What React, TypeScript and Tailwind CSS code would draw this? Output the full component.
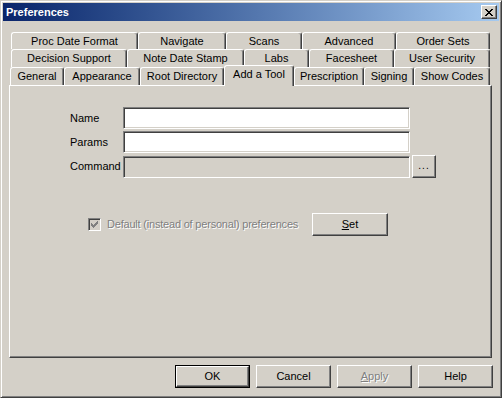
import React from 'react'

const raised =
  'border border-t-white border-l-white border-r-[#404040] border-b-[#404040] shadow-[inset_-1px_-1px_0_#808080,inset_1px_1px_0_#d4d0c8]'
const sunken =
  'border border-t-[#808080] border-l-[#808080] border-r-white border-b-white shadow-[inset_1px_1px_0_#404040,inset_-1px_-1px_0_#d4d0c8]'

type Tab = { label: string; w: string }

const row1: Tab[] = [
  { label: 'Proc Date Format', w: 'w-[127px]' },
  { label: 'Navigate', w: 'w-[88px]' },
  { label: 'Scans', w: 'w-[76px]' },
  { label: 'Advanced', w: 'w-[94px]' },
  { label: 'Order Sets', w: 'w-[94px]' },
]
const row2: Tab[] = [
  { label: 'Decision Support', w: 'w-[116px]' },
  { label: 'Note Date Stamp', w: 'w-[117px]' },
  { label: 'Labs', w: 'w-[65px]' },
  { label: 'Facesheet', w: 'w-[85px]' },
  { label: 'User Security', w: 'w-[96px]' },
]
const row3: Tab[] = [
  { label: 'General', w: 'w-[54px]' },
  { label: 'Appearance', w: 'w-[76px]' },
  { label: 'Root Directory', w: 'w-[84px]' },
  { label: 'Add a Tool', w: 'w-[70px]' },
  { label: 'Prescription', w: 'w-[70px]' },
  { label: 'Signing', w: 'w-[50px]' },
  { label: 'Show Codes', w: 'w-[76px]' },
]

function TabButton({ tab, active, h = 'h-[18px]' }: { tab: Tab; active?: boolean; h?: string }) {
  if (active) {
    return (
      <div
        className={`${tab.w} relative top-[1px] z-10 h-[21px] shrink-0 rounded-t-[3px] border-l border-t border-r border-t-white border-l-white border-r-[#404040] bg-[#d4d0c8] shadow-[inset_-1px_0_0_#808080] flex items-center justify-center pb-[3px]`}
      >
        {tab.label}
      </div>
    )
  }
  return (
    <div
      className={`${tab.w} ${h} shrink-0 rounded-t-[3px] border-l border-t border-r border-t-white border-l-white border-r-[#404040] shadow-[inset_-1px_0_0_#808080] flex items-center justify-center`}
    >
      {tab.label}
    </div>
  )
}

function Btn({ children, className = '' }: { children: React.ReactNode; className?: string }) {
  return (
    <div className={`${raised} h-[23px] flex items-center justify-center ${className}`}>{children}</div>
  )
}

export default function App() {
  return (
    <div className="w-[502px] h-[398px] overflow-hidden bg-[#d4d0c8] text-black text-[11px] leading-none font-['Liberation_Sans',Arial,sans-serif] border border-t-[#d4d0c8] border-l-[#d4d0c8] border-r-[#404040] border-b-[#404040] shadow-[inset_1px_1px_0_white,inset_-1px_-1px_0_#808080] p-[2px] flex flex-col">
      {/* title bar */}
      <div className="h-[18px] bg-gradient-to-r from-[#0a246a] to-[#a6caf0] flex items-center pl-[3px] pr-[2px]">
        <span className="text-white font-bold text-[11px]">Preferences</span>
        <div className={`${raised} ml-auto w-[16px] h-[14px] bg-[#d4d0c8] flex items-center justify-center`}>
          <svg width="8" height="7" viewBox="0 0 8 7" shapeRendering="crispEdges">
            <path d="M0 0h2v1h-2zM6 0h2v1h-2zM1 1h2v1h-2zM5 1h2v1h-2zM2 2h4v1h-4zM3 3h2v1h-2zM2 4h4v1h-4zM1 5h2v1h-2zM5 5h2v1h-2zM0 6h2v1h-2zM6 6h2v1h-2z" fill="#000" />
          </svg>
        </div>
      </div>

      {/* tabs */}
      <div className="mt-[11px] ml-[6px] flex flex-col">
        <div className="flex ml-[2px]">
          {row1.map((t) => (
            <TabButton key={t.label} tab={t} h="h-[17px]" />
          ))}
        </div>
        <div className="flex ml-[2px]">
          {row2.map((t) => (
            <TabButton key={t.label} tab={t} />
          ))}
        </div>
        <div className="flex ml-[1px] h-[18px] items-end">
          {row3.map((t) => (
            <TabButton key={t.label} tab={t} active={t.label === 'Add a Tool'} />
          ))}
        </div>

        {/* page */}
        <div className="w-[483px] h-[273px] border border-t-white border-l-white border-r-[#404040] border-b-[#404040] shadow-[inset_-1px_-1px_0_#808080] pl-[60px] pt-[21px]">
          <div className="flex flex-col gap-[2px]">
            <div className="flex items-center">
              <span className="w-[53px]">Name</span>
              <div className={`${sunken} w-[287px] h-[22px] bg-white`} />
            </div>
            <div className="flex items-center">
              <span className="w-[53px]">Params</span>
              <div className={`${sunken} w-[287px] h-[22px] bg-white`} />
            </div>
            <div className="flex items-center">
              <span className="w-[53px]">Command</span>
              <div className={`${sunken} w-[287px] h-[22px] bg-[#d4d0c8]`} />
              <Btn className="w-[24px] h-[22px] ml-[2px] items-end pb-[6px]">
                <span className="text-[10px] tracking-[1px]">...</span>
              </Btn>
            </div>
          </div>

          <div className="flex items-center mt-[35px] ml-[18px]">
            <div className="w-[224px] flex items-center">
              <div className={`${sunken} w-[13px] h-[13px] bg-[#d4d0c8] flex items-center justify-center shrink-0`}>
                <svg width="7" height="7" viewBox="0 0 7 7" shapeRendering="crispEdges">
                  <path d="M6 0h1v3h-1zM5 1h1v3h-1zM4 2h1v3h-1zM3 3h1v3h-1zM2 4h1v3h-1zM1 3h1v3h-1zM0 2h1v3h-1z" fill="#808080" />
                </svg>
              </div>
              <span className="ml-[6px] text-[#808080] [text-shadow:1px_1px_0_#fff] whitespace-nowrap tracking-[-0.2px]">
                Default (instead of personal) preferences
              </span>
            </div>
            <Btn className="w-[76px]">
              <span>
                <span className="underline">S</span>et
              </span>
            </Btn>
          </div>
        </div>
      </div>

      {/* bottom buttons */}
      <div className="mt-[7px] flex justify-end gap-[6px] pr-[6px]">
        <div className="border border-black w-[75px] h-[23px]">
          <div className="w-full h-full border border-t-white border-l-white border-r-[#404040] border-b-[#404040] shadow-[inset_-1px_-1px_0_#808080] flex items-center justify-center">
            OK
          </div>
        </div>
        <Btn className="w-[75px]">Cancel</Btn>
        <Btn className="w-[75px] text-[#808080] [text-shadow:1px_1px_0_#fff]">
          <span>
            <span className="underline">A</span>pply
          </span>
        </Btn>
        <Btn className="w-[75px]">Help</Btn>
      </div>
    </div>
  )
}
